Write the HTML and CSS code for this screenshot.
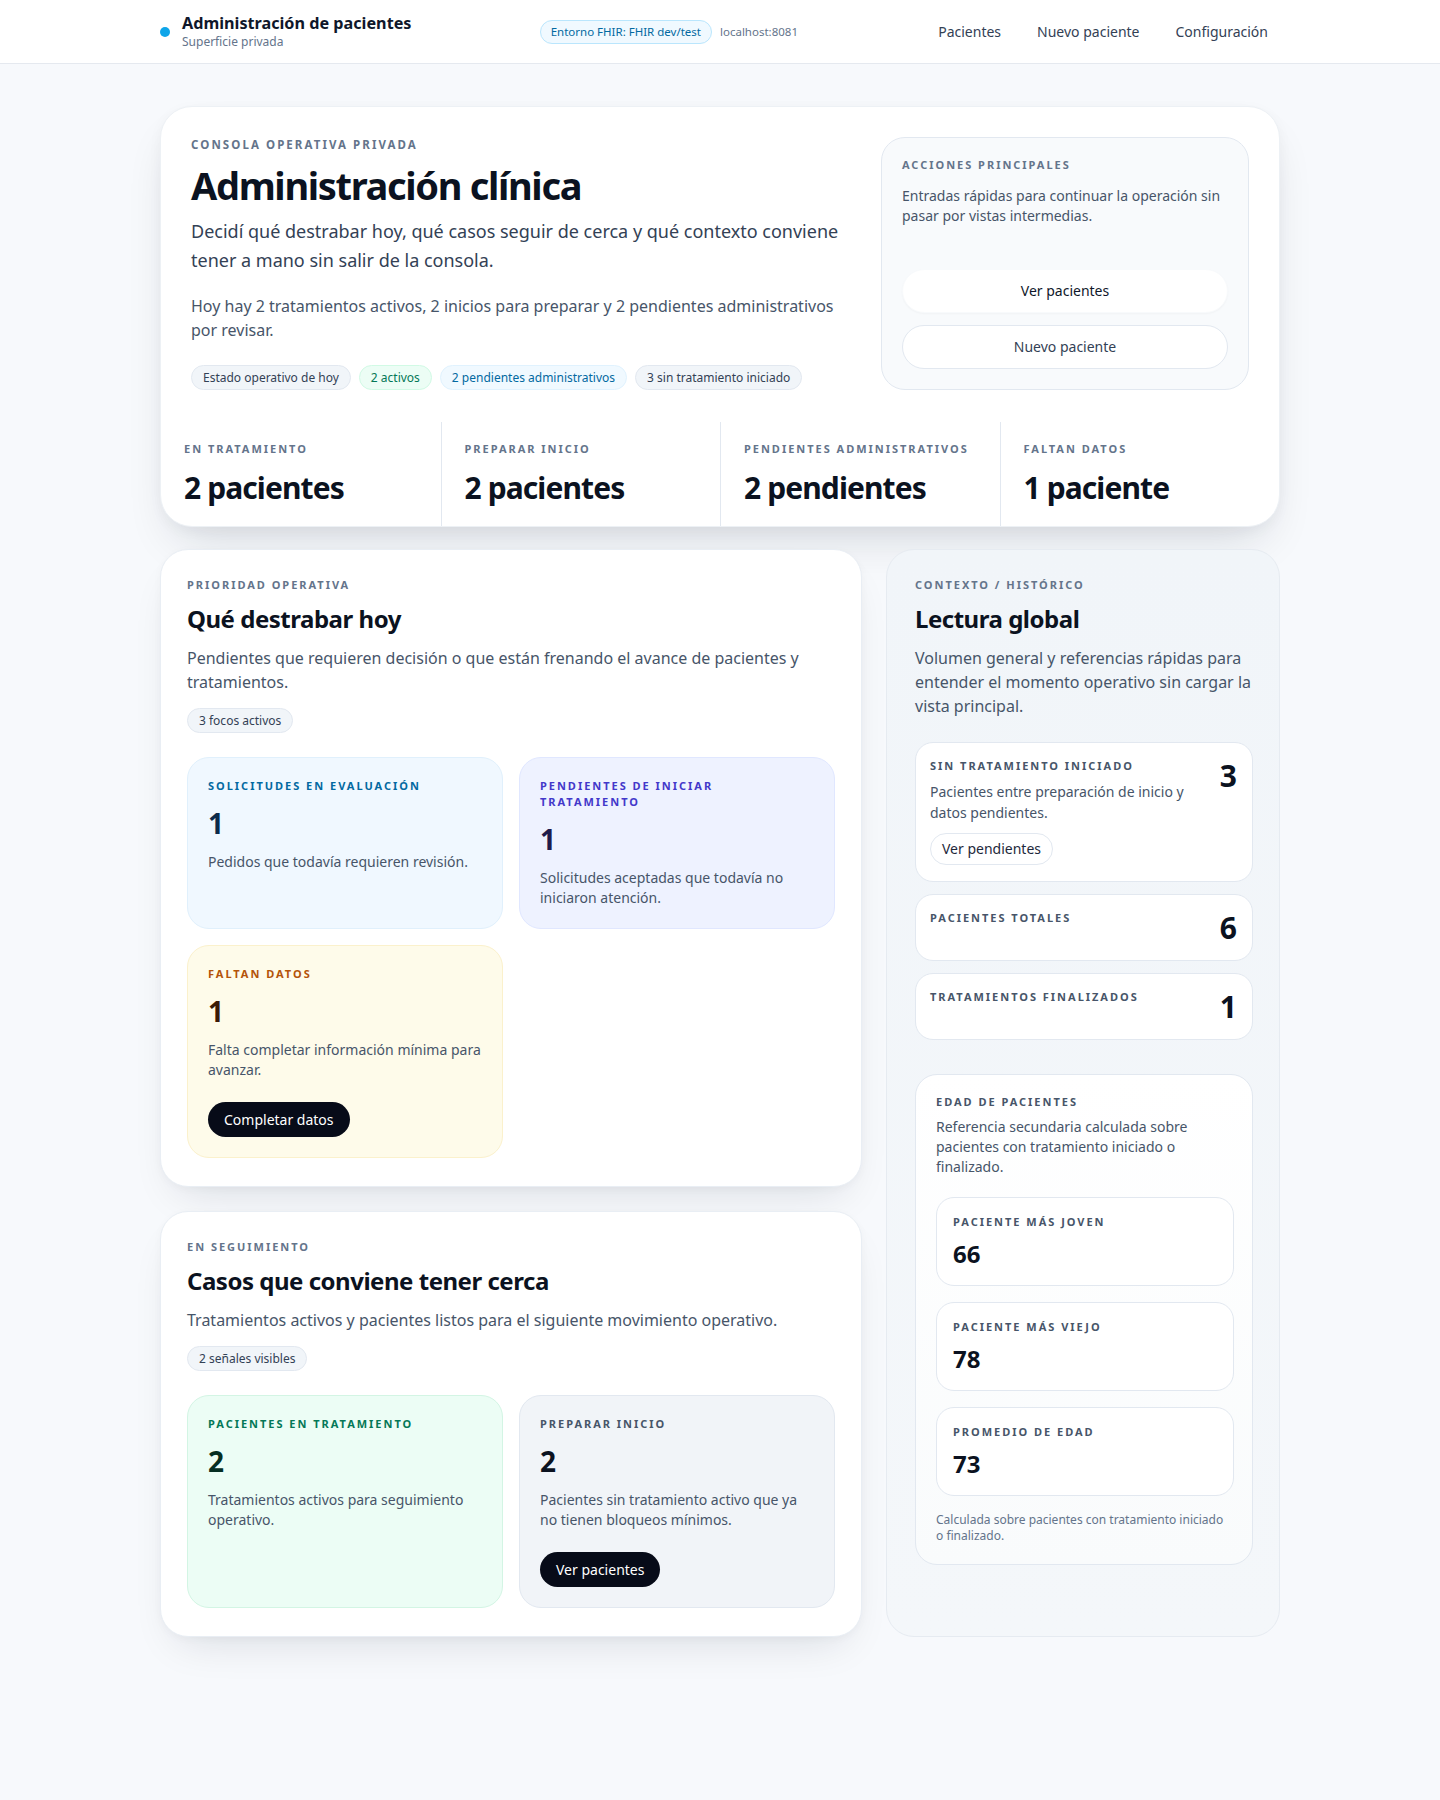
FILE: index.html
```html
<!DOCTYPE html>
<html lang="es">
<head>
<meta charset="utf-8">
<title>Administración de pacientes</title>
<link rel="stylesheet" href="styles.css">
</head>
<body>
<header class="topbar">
  <div class="topbar-inner">
    <div class="brand">
      <span class="brand-dot"></span>
      <div class="brand-text">
        <div class="brand-title">Administración de pacientes</div>
        <div class="brand-sub">Superficie privada</div>
      </div>
    </div>
    <div class="env">
      <span class="env-pill">Entorno FHIR: FHIR dev/test</span>
      <span class="env-host">localhost:8081</span>
    </div>
    <nav class="nav">
      <a class="nav-link">Pacientes</a>
      <a class="nav-link">Nuevo paciente</a>
      <a class="nav-link">Configuración</a>
    </nav>
  </div>
</header>

<main class="page">
  <section class="hero">
    <div class="hero-top">
      <div class="hero-main">
        <div class="eyebrow eyebrow-lg">Consola operativa privada</div>
        <h1 class="hero-title">Administración clínica</h1>
        <p class="hero-lead">Decidí qué destrabar hoy, qué casos seguir de cerca y qué contexto conviene tener a mano sin salir de la consola.</p>
        <p class="hero-summary">Hoy hay 2 tratamientos activos, 2 inicios para preparar y 2 pendientes administrativos por revisar.</p>
        <div class="pills">
          <span class="pill">Estado operativo de hoy</span>
          <span class="pill pill-green">2 activos</span>
          <span class="pill pill-blue">2 pendientes administrativos</span>
          <span class="pill">3 sin tratamiento iniciado</span>
        </div>
      </div>
      <aside class="actions">
        <div class="eyebrow">Acciones principales</div>
        <p class="actions-text">Entradas rápidas para continuar la operación sin pasar por vistas intermedias.</p>
        <div class="actions-buttons">
          <a class="action-btn action-btn-primary">Ver pacientes</a>
          <a class="action-btn">Nuevo paciente</a>
        </div>
      </aside>
    </div>
    <div class="stats">
      <div class="stat">
        <div class="eyebrow">En tratamiento</div>
        <div class="stat-value">2 pacientes</div>
      </div>
      <div class="stat">
        <div class="eyebrow">Preparar inicio</div>
        <div class="stat-value">2 pacientes</div>
      </div>
      <div class="stat">
        <div class="eyebrow">Pendientes administrativos</div>
        <div class="stat-value">2 pendientes</div>
      </div>
      <div class="stat">
        <div class="eyebrow">Faltan datos</div>
        <div class="stat-value">1 paciente</div>
      </div>
    </div>
  </section>

  <div class="layout">
    <div class="col-main">
      <section class="panel">
        <div class="eyebrow">Prioridad operativa</div>
        <h2 class="panel-title">Qué destrabar hoy</h2>
        <p class="panel-desc">Pendientes que requieren decisión o que están frenando el avance de pacientes y tratamientos.</p>
        <div class="pills pills-panel"><span class="pill">3 focos activos</span></div>
        <div class="tiles">
          <div class="tile tile-sky">
            <div class="tile-label">Solicitudes en evaluación</div>
            <div class="tile-value">1</div>
            <p class="tile-desc">Pedidos que todavía requieren revisión.</p>
          </div>
          <div class="tile tile-indigo">
            <div class="tile-label">Pendientes de iniciar tratamiento</div>
            <div class="tile-value">1</div>
            <p class="tile-desc">Solicitudes aceptadas que todavía no iniciaron atención.</p>
          </div>
          <div class="tile tile-amber">
            <div class="tile-label">Faltan datos</div>
            <div class="tile-value">1</div>
            <p class="tile-desc">Falta completar información mínima para avanzar.</p>
            <a class="dark-btn">Completar datos</a>
          </div>
        </div>
      </section>

      <section class="panel">
        <div class="eyebrow">En seguimiento</div>
        <h2 class="panel-title">Casos que conviene tener cerca</h2>
        <p class="panel-desc">Tratamientos activos y pacientes listos para el siguiente movimiento operativo.</p>
        <div class="pills pills-panel"><span class="pill">2 señales visibles</span></div>
        <div class="tiles">
          <div class="tile tile-green">
            <div class="tile-label">Pacientes en tratamiento</div>
            <div class="tile-value">2</div>
            <p class="tile-desc">Tratamientos activos para seguimiento operativo.</p>
          </div>
          <div class="tile tile-slate">
            <div class="tile-label">Preparar inicio</div>
            <div class="tile-value">2</div>
            <p class="tile-desc">Pacientes sin tratamiento activo que ya no tienen bloqueos mínimos.</p>
            <a class="dark-btn">Ver pacientes</a>
          </div>
        </div>
      </section>
    </div>

    <aside class="context">
      <div class="eyebrow">Contexto / histórico</div>
      <h2 class="panel-title">Lectura global</h2>
      <p class="panel-desc">Volumen general y referencias rápidas para entender el momento operativo sin cargar la vista principal.</p>

      <div class="metrics">
        <div class="metric">
          <div class="metric-body">
            <div class="metric-label">Sin tratamiento iniciado</div>
            <p class="metric-desc">Pacientes entre preparación de inicio y datos pendientes.</p>
            <a class="outline-btn">Ver pendientes</a>
          </div>
          <div class="metric-value">3</div>
        </div>
        <div class="metric">
          <div class="metric-body">
            <div class="metric-label">Pacientes totales</div>
          </div>
          <div class="metric-value">6</div>
        </div>
        <div class="metric">
          <div class="metric-body">
            <div class="metric-label">Tratamientos finalizados</div>
          </div>
          <div class="metric-value">1</div>
        </div>
      </div>

      <div class="ages">
        <div class="metric-label">Edad de pacientes</div>
        <p class="ages-desc">Referencia secundaria calculada sobre pacientes con tratamiento iniciado o finalizado.</p>
        <div class="age-list">
          <div class="age-box">
            <div class="metric-label">Paciente más joven</div>
            <div class="age-value">66</div>
          </div>
          <div class="age-box">
            <div class="metric-label">Paciente más viejo</div>
            <div class="age-value">78</div>
          </div>
          <div class="age-box">
            <div class="metric-label">Promedio de edad</div>
            <div class="age-value">73</div>
          </div>
        </div>
        <p class="ages-note">Calculada sobre pacientes con tratamiento iniciado o finalizado.</p>
      </div>
    </aside>
  </div>
</main>
</body>
</html>
```
FILE: styles.css
```css
* {
  box-sizing: border-box;
}

html, body {
  margin: 0;
  padding: 0;
}

body {
  font-family: "Noto Sans", "Open Sans", "Liberation Sans", sans-serif;
  background: #f7f9fc;
  color: #0f172a;
  min-height: 1800px;
}

p {
  margin: 0;
}

h1, h2 {
  margin: 0;
}

a {
  text-decoration: none;
  color: inherit;
  cursor: pointer;
}

/* ---------- Top bar ---------- */
.topbar {
  background: #ffffff;
  border-bottom: 1px solid #e5e9ef;
}

.topbar-inner {
  max-width: 1120px;
  margin: 0 auto;
  height: 63px;
  display: flex;
  align-items: center;
  justify-content: space-between;
}

.brand {
  display: flex;
  align-items: center;
  gap: 12px;
}

.brand-dot {
  width: 10px;
  height: 10px;
  border-radius: 50%;
  background: #0ea5e9;
  flex: none;
}

.brand-title {
  font-size: 16.2px;
  line-height: 20px;
  font-weight: 700;
  color: #0f172a;
}

.brand-sub {
  margin-top: 1px;
  font-size: 12px;
  line-height: 16px;
  color: #64748b;
}

.env {
  display: flex;
  align-items: center;
  gap: 8px;
}

.env-pill {
  font-size: 11.5px;
  line-height: 16px;
  padding: 3px 10px;
  border-radius: 999px;
  background: #f0f9ff;
  border: 1px solid #bae6fd;
  color: #0369a1;
}

.env-host {
  font-size: 11.5px;
  color: #64748b;
}

.nav {
  display: flex;
  align-items: center;
  gap: 12px;
}

.nav-link {
  font-size: 14px;
  line-height: 20px;
  padding: 8px 12px;
  color: #334155;
  border-radius: 999px;
}

/* ---------- Page ---------- */
.page {
  max-width: 1120px;
  margin: 0 auto;
  padding: 42px 0 80px;
}

.eyebrow {
  font-size: 11px;
  line-height: 14px;
  font-weight: 700;
  letter-spacing: 0.18em;
  text-transform: uppercase;
  color: #64748b;
}

.eyebrow-lg {
  font-size: 11.5px;
  line-height: 16px;
}

/* ---------- Hero ---------- */
.hero {
  background: #ffffff;
  border: 1px solid #edf1f5;
  border-radius: 32px;
  box-shadow: 0 24px 48px -16px rgba(15, 23, 42, 0.16), 0 4px 14px rgba(15, 23, 42, 0.04);
  overflow: hidden;
}

.hero-top {
  display: grid;
  grid-template-columns: minmax(0, 1fr) 368px;
  gap: 32px;
  padding: 30px 30px 32px;
}

.hero-title {
  margin-top: 10px;
  font-size: 38px;
  line-height: 44px;
  font-weight: 700;
  letter-spacing: -0.035em;
  color: #0b1220;
}

.hero-lead {
  margin-top: 10px;
  font-size: 18px;
  line-height: 28.8px;
  color: #334155;
}

.hero-summary {
  margin-top: 19px;
  font-size: 16px;
  line-height: 24px;
  color: #475569;
}

.pills {
  display: flex;
  flex-wrap: wrap;
  gap: 8px;
  margin-top: 23px;
}

.pill {
  font-size: 12px;
  line-height: 17px;
  padding: 3px 11px;
  border-radius: 999px;
  background: #f1f5f9;
  border: 1px solid #e2e8f0;
  color: #334155;
}

.pill-green {
  background: #ecfdf5;
  border-color: #d1fae5;
  color: #047857;
}

.pill-blue {
  background: #f0f9ff;
  border-color: #e0f2fe;
  color: #0369a1;
}

.actions {
  display: flex;
  flex-direction: column;
  background: #f8fafc;
  border: 1px solid #e2e8f0;
  border-radius: 24px;
  padding: 20px;
}

.actions-text {
  margin-top: 14px;
  font-size: 14px;
  line-height: 20px;
  color: #475569;
}

.actions-buttons {
  margin-top: auto;
  display: flex;
  flex-direction: column;
  gap: 12px;
}

.action-btn {
  display: block;
  text-align: center;
  font-size: 14px;
  line-height: 20px;
  padding: 11px 16px;
  border-radius: 999px;
  background: #ffffff;
  border: 1px solid #e2e8f0;
  color: #334155;
}

.action-btn-primary {
  border-color: #f8fafc;
  color: #0f172a;
  box-shadow: 0 1px 2px rgba(15, 23, 42, 0.03);
}

.stats {
  display: grid;
  grid-template-columns: repeat(4, minmax(0, 1fr));
}

.stat {
  padding: 20px 23px;
}

.stat + .stat {
  border-left: 1px solid #e2e8f0;
}

.stat-value {
  margin-top: 14px;
  font-size: 30px;
  line-height: 36px;
  font-weight: 700;
  letter-spacing: -0.03em;
  color: #0b1220;
}

/* ---------- Layout ---------- */
.layout {
  margin-top: 22px;
  display: grid;
  grid-template-columns: minmax(0, 1fr) 394px;
  gap: 24px;
}

.col-main {
  display: flex;
  flex-direction: column;
  gap: 24px;
}

.panel {
  background: #ffffff;
  border: 1px solid #e9eef4;
  border-radius: 28px;
  padding: 28px 26px;
  box-shadow: 0 20px 44px -18px rgba(15, 23, 42, 0.14), 0 2px 8px rgba(15, 23, 42, 0.03);
}

.panel-title {
  margin-top: 12px;
  font-size: 24px;
  line-height: 30px;
  font-weight: 700;
  letter-spacing: -0.02em;
  color: #0b1220;
}

.panel-desc {
  margin-top: 12px;
  font-size: 16px;
  line-height: 24px;
  color: #475569;
}

.pills-panel {
  margin-top: 14px;
}

.tiles {
  margin-top: 24px;
  display: grid;
  grid-template-columns: repeat(2, minmax(0, 1fr));
  gap: 16px;
}

.tile {
  border-radius: 22px;
  border: 1px solid #e2e8f0;
  padding: 20px;
}

.tile-label {
  font-size: 11px;
  line-height: 16px;
  font-weight: 700;
  letter-spacing: 0.18em;
  text-transform: uppercase;
}

.tile-value {
  margin-top: 12px;
  font-size: 28px;
  line-height: 34px;
  font-weight: 700;
}

.tile-desc {
  margin-top: 12px;
  font-size: 14px;
  line-height: 20px;
  color: #475569;
}

.tile-sky {
  background: #f0f8ff;
  border-color: #e0f0fc;
}
.tile-sky .tile-label { color: #0369a1; }
.tile-sky .tile-value { color: #0c2a4a; }

.tile-indigo {
  background: #eef2ff;
  border-color: #e0e7ff;
}
.tile-indigo .tile-label { color: #4338ca; }
.tile-indigo .tile-value { color: #1e1b4b; }

.tile-amber {
  background: #fefbea;
  border-color: #fbf1cc;
}
.tile-amber .tile-label { color: #b45309; }
.tile-amber .tile-value { color: #3b1a06; }

.tile-green {
  background: #ecfdf5;
  border-color: #d3f5e4;
}
.tile-green .tile-label { color: #047857; }
.tile-green .tile-value { color: #052e22; }

.tile-slate {
  background: #f1f4f8;
  border-color: #e2e8f0;
}
.tile-slate .tile-label { color: #475569; }
.tile-slate .tile-value { color: #0b1220; }

.dark-btn {
  display: inline-block;
  margin-top: 22px;
  font-size: 14px;
  line-height: 19px;
  padding: 8px 16px;
  border-radius: 999px;
  background: #070b18;
  color: #ffffff;
}

/* ---------- Context aside ---------- */
.context {
  background: linear-gradient(180deg, #f1f5f9 0%, #f4f7fa 100%);
  border: 1px solid #e6ebf1;
  border-radius: 28px;
  padding: 28px 26px 28px 28px;
}

.metrics {
  margin-top: 24px;
  display: flex;
  flex-direction: column;
  gap: 12px;
}

.metric {
  display: flex;
  justify-content: space-between;
  align-items: flex-start;
  gap: 12px;
  background: #ffffff;
  border: 1px solid #e2e8f0;
  border-radius: 18px;
  padding: 16px 15px 16px 14px;
}

.metric-label {
  font-size: 11px;
  line-height: 14px;
  font-weight: 700;
  letter-spacing: 0.18em;
  text-transform: uppercase;
  color: #475569;
}

.metric-desc {
  margin-top: 8px;
  font-size: 14px;
  line-height: 21px;
  color: #475569;
}

.outline-btn {
  display: inline-block;
  margin-top: 10px;
  font-size: 14px;
  line-height: 20px;
  padding: 5px 11px;
  border-radius: 999px;
  background: #ffffff;
  border: 1px solid #e2e8f0;
  color: #1e293b;
}

.metric-value {
  font-size: 30px;
  line-height: 33px;
  font-weight: 700;
  color: #0b1220;
}

.ages {
  margin-top: 34px;
  background: linear-gradient(180deg, #ffffff 0%, #f9fbfc 100%);
  border: 1px solid #e2e8f0;
  border-radius: 22px;
  padding: 20px 18px 20px 20px;
}

.ages-desc {
  margin-top: 8px;
  font-size: 14px;
  line-height: 20px;
  color: #475569;
}

.age-list {
  margin-top: 20px;
  display: flex;
  flex-direction: column;
  gap: 16px;
}

.age-box {
  background: #ffffff;
  border: 1px solid #e2e8f0;
  border-radius: 18px;
  padding: 17px 16px;
}

.age-value {
  margin-top: 10px;
  font-size: 24px;
  line-height: 29px;
  font-weight: 700;
  color: #0b1220;
}

.ages-note {
  margin-top: 16px;
  padding-right: 10px;
  font-size: 12px;
  line-height: 16px;
  color: #64748b;
}
```
